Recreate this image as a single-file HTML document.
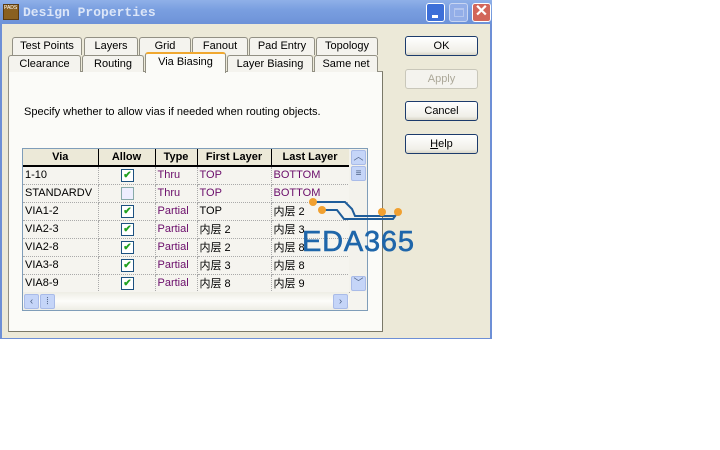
<!DOCTYPE html>
<html><head><meta charset="utf-8"><style>
*{box-sizing:border-box;margin:0;padding:0}
body{width:720px;height:450px;background:#fff;position:relative;overflow:hidden;font-family:"Liberation Sans","Noto Sans CJK SC",sans-serif;font-size:11px;color:#000}
.a{position:absolute}
#win{left:0;top:0;width:492px;height:339px;background:#ece9d8;border-left:2px solid #6d8fd6;border-right:2px solid #6d8fd6;border-bottom:1px solid #6d8fd6}
#title{left:0;top:0;width:492px;height:24px;background:linear-gradient(#8fb0e8,#7a9fe0 40%,#6d92d8);}
.tb{top:3px;width:19px;height:19px;border:1px solid #fff;border-radius:3px}
.tab{position:absolute;background:#f4f3ee;border:1px solid #929084;border-bottom:none;border-radius:3px 3px 0 0;text-align:center;font-size:11px;line-height:17px}
.btn{position:absolute;left:405px;width:73px;height:20px;border:1px solid #1c3b6c;border-radius:3px;background:linear-gradient(#fff,#f0efe8 80%,#d8d5c8);text-align:center;line-height:18px;font-size:11px}
table{border-collapse:collapse;position:absolute;left:23px;top:149px;table-layout:fixed}
td{height:18px;border-right:1px dotted #aaa;border-bottom:1px dotted #aaa;padding-left:2px;white-space:nowrap;overflow:hidden;font-size:11px}
th{height:17px;background:#ece9d8;border-right:1px solid #000;border-bottom:2px solid #000;font-weight:bold;font-size:11px}
.p{color:#6a0c6a}
.cb{display:inline-block;width:13px;height:13px;border:1px solid #1c5180;background:#fff;vertical-align:middle;color:#21a121;font-size:10px;line-height:11px;text-align:center;font-weight:bold}
.sb{width:15px;height:15px;background:#c5d5f8;border:1px solid #a9bbe8;border-radius:2px;color:#4d6185;font-size:10px;text-align:center;line-height:13px}
</style></head><body>
<div id="win" class="a"></div>
<div id="title" class="a">
 <div class="a" style="left:3px;top:4px;width:16px;height:16px;background:#8a6020;border:1px solid #5a3a10;color:#fff;font-size:5px;line-height:6px">PADS</div>
 <div class="a" style="left:23px;top:5px;color:#dce6f8;font-family:'Liberation Mono',monospace;font-weight:bold;font-size:13px">Design Properties</div>
 <div class="a tb" style="left:426px;background:#3d6fd8"><div class="a" style="left:5px;top:11px;width:6px;height:3px;background:#fff"></div></div>
 <div class="a tb" style="left:449px;background:#93aee8;border-color:#c9d6f2"><div class="a" style="left:4px;top:4px;width:10px;height:9px;border:1px solid #b4c6ee;border-top-width:2px"></div></div>
 <div class="a tb" style="left:472px;background:#d2665a;color:#fff;font-weight:bold;font-size:16px;line-height:16px;text-align:center">✕</div>
</div>
<div class="a" style="left:8px;top:71px;width:375px;height:261px;background:#fbfbf8;border:1px solid #929084;border-right-color:#7a7868;border-bottom-color:#7a7868"></div>
<div class="tab" style="left:12px;top:37px;width:70px;height:18px">Test Points</div>
<div class="tab" style="left:84px;top:37px;width:54px;height:18px">Layers</div>
<div class="tab" style="left:139px;top:37px;width:52px;height:18px">Grid</div>
<div class="tab" style="left:192px;top:37px;width:56px;height:18px">Fanout</div>
<div class="tab" style="left:249px;top:37px;width:66px;height:18px">Pad Entry</div>
<div class="tab" style="left:316px;top:37px;width:62px;height:18px">Topology</div>
<div class="tab" style="left:8px;top:55px;width:73px;height:17px">Clearance</div>
<div class="tab" style="left:82px;top:55px;width:62px;height:17px">Routing</div>
<div class="tab" style="left:227px;top:55px;width:86px;height:17px">Layer Biasing</div>
<div class="tab" style="left:314px;top:55px;width:64px;height:17px">Same net</div>
<div class="tab" style="left:145px;top:52px;width:81px;height:21px;background:#fbfbf8;border-top:2px solid #f0a830;line-height:17px">Via Biasing</div>
<div class="a" style="left:24px;top:106px;font-size:11px">Specify whether to allow vias if needed when routing objects.</div>
<div class="a" style="left:22px;top:148px;width:346px;height:163px;background:#f5f4ef;border:1px solid #7f9db9"></div>
<table>
<tr><th style="width:75px">Via</th><th style="width:57px">Allow</th><th style="width:42px">Type</th><th style="width:74px">First Layer</th><th style="width:78px">Last Layer</th></tr>
<tr><td>1-10</td><td style="text-align:center"><span class="cb">✔</span></td><td class="p">Thru</td><td class="p">TOP</td><td class="p">BOTTOM</td></tr>
<tr><td>STANDARDV</td><td style="text-align:center"><span class="cb" style="border-color:#8aa;background:#eef"></span></td><td class="p">Thru</td><td class="p">TOP</td><td class="p">BOTTOM</td></tr>
<tr><td>VIA1-2</td><td style="text-align:center"><span class="cb">✔</span></td><td class="p">Partial</td><td>TOP</td><td>内层 2</td></tr>
<tr><td>VIA2-3</td><td style="text-align:center"><span class="cb">✔</span></td><td class="p">Partial</td><td>内层 2</td><td>内层 3</td></tr>
<tr><td>VIA2-8</td><td style="text-align:center"><span class="cb">✔</span></td><td class="p">Partial</td><td>内层 2</td><td>内层 8</td></tr>
<tr><td>VIA3-8</td><td style="text-align:center"><span class="cb">✔</span></td><td class="p">Partial</td><td>内层 3</td><td>内层 8</td></tr>
<tr><td>VIA8-9</td><td style="text-align:center"><span class="cb">✔</span></td><td class="p">Partial</td><td>内层 8</td><td>内层 9</td></tr>
</table>
<div class="a" style="left:349px;top:149px;width:18px;height:143px;background:#f3f2ec"></div>
<div class="a sb" style="left:351px;top:150px">︿</div>
<div class="a sb" style="left:351px;top:166px">≡</div>
<div class="a sb" style="left:351px;top:276px">﹀</div>
<div class="a" style="left:23px;top:292px;width:326px;height:18px;background:linear-gradient(#eeede5,#fdfdfa,#eeede5)"></div>
<div class="a sb" style="left:24px;top:294px">‹</div>
<div class="a sb" style="left:40px;top:294px">⦙</div>
<div class="a sb" style="left:333px;top:294px">›</div>
<div class="btn" style="top:36px">OK</div>
<div class="btn" style="top:69px;color:#aca899;border-color:#c9c7ba;background:#f4f3ee">Apply</div>
<div class="btn" style="top:101px">Cancel</div>
<div class="btn" style="top:134px"><u>H</u>elp</div>
<svg class="a" style="left:300px;top:195px" width="125" height="62">
<path d="M13 7 H45 L52 14 L55 21 H95" stroke="#1f5d9a" stroke-width="2" fill="none"/>
<path d="M22 15 H37 L44 24 H93 L98 17" stroke="#1f5d9a" stroke-width="2" fill="none"/>
<circle cx="13" cy="7" r="4" fill="#f0a030"/><circle cx="22" cy="15" r="4" fill="#f0a030"/>
<circle cx="82" cy="17" r="4" fill="#f0a030"/><circle cx="98" cy="17" r="4" fill="#f0a030"/>
<text x="2" y="56" font-family="Liberation Sans,sans-serif" font-size="29" textLength="112" fill="#1f66aa" stroke="#1f66aa" stroke-width="0.6">EDA365</text>
</svg>
</body></html>
